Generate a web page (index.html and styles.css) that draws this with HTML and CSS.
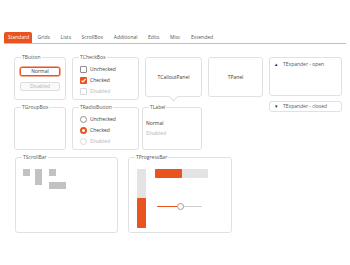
FILE: index.html
```html
<!DOCTYPE html>
<html>

<head>
    <link rel="stylesheet" href="styles.css">
</head>

<body>
    <div class='tabs'>
        <span class='tab active'>Standard</span>
        <span class='tab'>Grids</span>
        <span class='tab'>Lists</span>
        <span class='tab'>ScrollBox</span>
        <span class='tab'>Additional</span>
        <span class='tab'>Edits</span>
        <span class='tab'>Misc</span>
        <span class='tab'>Extended</span>
    </div>

    <div class='grid'>
        <div class='group'>
            <span class='group-title'>TButton</span>
            <div class='btn-stack'>
                <div class='btn btn-focus'>Normal</div>
                <div class='btn btn-disabled'>Disabled</div>
            </div>
        </div>

        <div class='group'>
            <span class='group-title'>TCheckBox</span>
            <div class='checks'>
                <div class='check-row'><span class='box'></span>Unchecked</div>
                <div class='check-row'>
                    <span class='box box-on'>
                        <svg width='7' height='7' viewBox='0 0 7 7'><path d='M1.5 3.6 L3 5 L5.6 1.9' fill='none' stroke='#fff' stroke-width='1.2'/></svg>
                    </span>Checked
                </div>
                <div class='check-row off'><span class='box'></span>Disabled</div>
            </div>
        </div>

        <div class='panel callout'>TCalloutPanel</div>

        <div class='panel'>TPanel</div>

        <div class='expanders'>
            <div class='expander expander-open'><span class='arrow'>&#9650;</span>TExpander - open</div>
            <div class='expander'><span class='arrow'>&#9660;</span>TExpander - closed</div>
        </div>

        <div class='group'>
            <span class='group-title'>TGroupBox</span>
        </div>

        <div class='group'>
            <span class='group-title'>TRadioButton</span>
            <div class='checks'>
                <div class='check-row'><span class='radio'></span>Unchecked</div>
                <div class='check-row'><span class='radio radio-on'></span>Checked</div>
                <div class='check-row off'><span class='radio'></span>Disabled</div>
            </div>
        </div>

        <div class='group label-group'>
            <span class='group-title'>TLabel</span>
            <div class='labels'>
                <div>Normal</div>
                <div class='off'>Disabled</div>
            </div>
        </div>
    </div>

    <div class='row3'>
        <div class='group scroll-group'>
            <span class='group-title'>TScrollBar</span>
            <div class='sb-demo'>
                <div class='thumb sq'></div>
                <div class='thumb tall'></div>
                <div class='sb-col'>
                    <div class='thumb sq'></div>
                    <div class='thumb wide'></div>
                </div>
            </div>
        </div>

        <div class='group progress-group'>
            <span class='group-title'>TProgressBar</span>
            <div class='pb-demo'>
                <div class='vbar'><div class='vfill'></div></div>
                <div class='pb-col'>
                    <div class='hbar'><div class='hfill'></div></div>
                    <div class='slider'>
                        <div class='slider-fill'></div>
                        <div class='slider-thumb'></div>
                    </div>
                </div>
            </div>
        </div>
    </div>
</body>

</html>
```

FILE: styles.css
```css
body {
    margin: 0;
    font-family: "Open Sans", "Liberation Sans", sans-serif;
    font-size: 5px;
    color: #3a3a3a;
    background: #fff;
}

.tabs {
    display: flex;
    margin: 32px 4px 0 4px;
    height: 11px;
    border-bottom: 1px solid #f9ad8d;
}

.tab {
    padding: 0 5.3px;
    line-height: 11px;
    color: #555;
}

.tab.active {
    background: #e9531f;
    color: #fff;
    border-radius: 2px 2px 0 0;
    padding: 0 3px 0 4px;
}

.grid {
    display: grid;
    grid-template-columns: 52px 67px 57px 55px 73px;
    grid-template-rows: 43px 43px;
    column-gap: 6px;
    row-gap: 7px;
    margin: 13px 0 0 14px;
}

.group,
.panel,
.expander {
    position: relative;
    border: 1px solid #e1e1e1;
    border-radius: 3px;
    box-sizing: border-box;
    background: #fff;
}

.group-title {
    position: absolute;
    top: -4px;
    left: 6px;
    padding: 0 1px;
    line-height: 7px;
    background: #fff;
    color: #555;
}

.btn-stack {
    display: flex;
    flex-direction: column;
    gap: 6px;
    padding: 9px 5px 0 5px;
}

.btn {
    height: 9px;
    line-height: 7px;
    text-align: center;
    border: 1px solid #ddd;
    border-radius: 2px;
    box-sizing: border-box;
}

.btn-focus {
    border-color: #e9531f;
    box-shadow: 0 0 0 0.5px #e9531f;
}

.btn-disabled {
    color: #b5b5b5;
    background: #fafafa;
}

.checks {
    display: flex;
    flex-direction: column;
    gap: 4px;
    padding: 8px 0 0 7px;
}

.check-row {
    display: flex;
    align-items: center;
    height: 7px;
    line-height: 7px;
    gap: 3px;
}

.off {
    color: #b5b5b5;
}

.box {
    width: 7px;
    height: 7px;
    border: 1px solid #8f8f8f;
    border-radius: 1px;
    box-sizing: border-box;
    display: flex;
}

.box-on {
    border: none;
    background: #e9531f;
}

.off .box,
.off .radio {
    border-color: #d8d8d8;
}

.radio {
    width: 7px;
    height: 7px;
    border: 1px solid #8f8f8f;
    border-radius: 50%;
    box-sizing: border-box;
}

.radio-on {
    border: 2px solid #e9531f;
}

.panel {
    height: 40px;
    display: flex;
    align-items: center;
    justify-content: center;
}

.callout::after {
    content: '';
    position: absolute;
    left: 50%;
    bottom: -4px;
    width: 6px;
    height: 6px;
    margin-left: -4px;
    background: #fff;
    border-right: 1px solid #e1e1e1;
    border-bottom: 1px solid #e1e1e1;
    transform: rotate(45deg);
}

.expanders {
    grid-row: 1 / 3;
    grid-column: 5;
    display: flex;
    flex-direction: column;
    gap: 5px;
}

.expander {
    height: 11px;
    line-height: 9px;
    padding-left: 4px;
    display: flex;
    color: #555;
}

.expander-open {
    height: 39px;
    padding-top: 2px;
}

.arrow {
    font-size: 4.5px;
    width: 9px;
    color: #333;
}

.label-group {
    margin-left: -3px;
}

.labels {
    padding: 10px 0 0 3px;
    line-height: 10px;
}

.row3 {
    display: flex;
    gap: 10px;
    margin: 7px 0 0 15px;
}

.scroll-group {
    width: 103px;
    height: 76px;
}

.progress-group {
    width: 104px;
    height: 76px;
}

.sb-demo {
    display: flex;
    align-items: flex-start;
    gap: 5px;
    padding: 11px 0 0 7px;
}

.sb-col {
    display: flex;
    flex-direction: column;
    gap: 6px;
    margin-left: 2px;
}

.thumb {
    background: #c2c2c2;
}

.sq {
    width: 7px;
    height: 7px;
}

.tall {
    width: 7px;
    height: 16px;
}

.wide {
    width: 17px;
    height: 7px;
}

.pb-demo {
    display: flex;
    align-items: flex-start;
    gap: 9px;
    padding: 11px 0 0 8px;
}

.vbar {
    width: 9px;
    height: 59px;
    background: #e3e3e3;
    border-radius: 1px;
    display: flex;
    align-items: flex-end;
}

.vfill {
    width: 100%;
    height: 30px;
    background: #e9531f;
    border-radius: 1px;
}

.hbar {
    width: 53px;
    height: 9px;
    background: #e3e3e3;
    border-radius: 1px;
}

.hfill {
    width: 27px;
    height: 100%;
    background: #e9531f;
    border-radius: 1px;
}

.slider {
    position: relative;
    width: 45px;
    height: 1px;
    margin: 28px 0 0 2px;
    background: #cfcfcf;
}

.slider-fill {
    width: 21px;
    height: 1px;
    background: #e9531f;
}

.slider-thumb {
    position: absolute;
    left: 20px;
    top: -3px;
    width: 7px;
    height: 7px;
    border: 1px solid #9c9c9c;
    border-radius: 50%;
    background: #fff;
    box-sizing: border-box;
}
```
